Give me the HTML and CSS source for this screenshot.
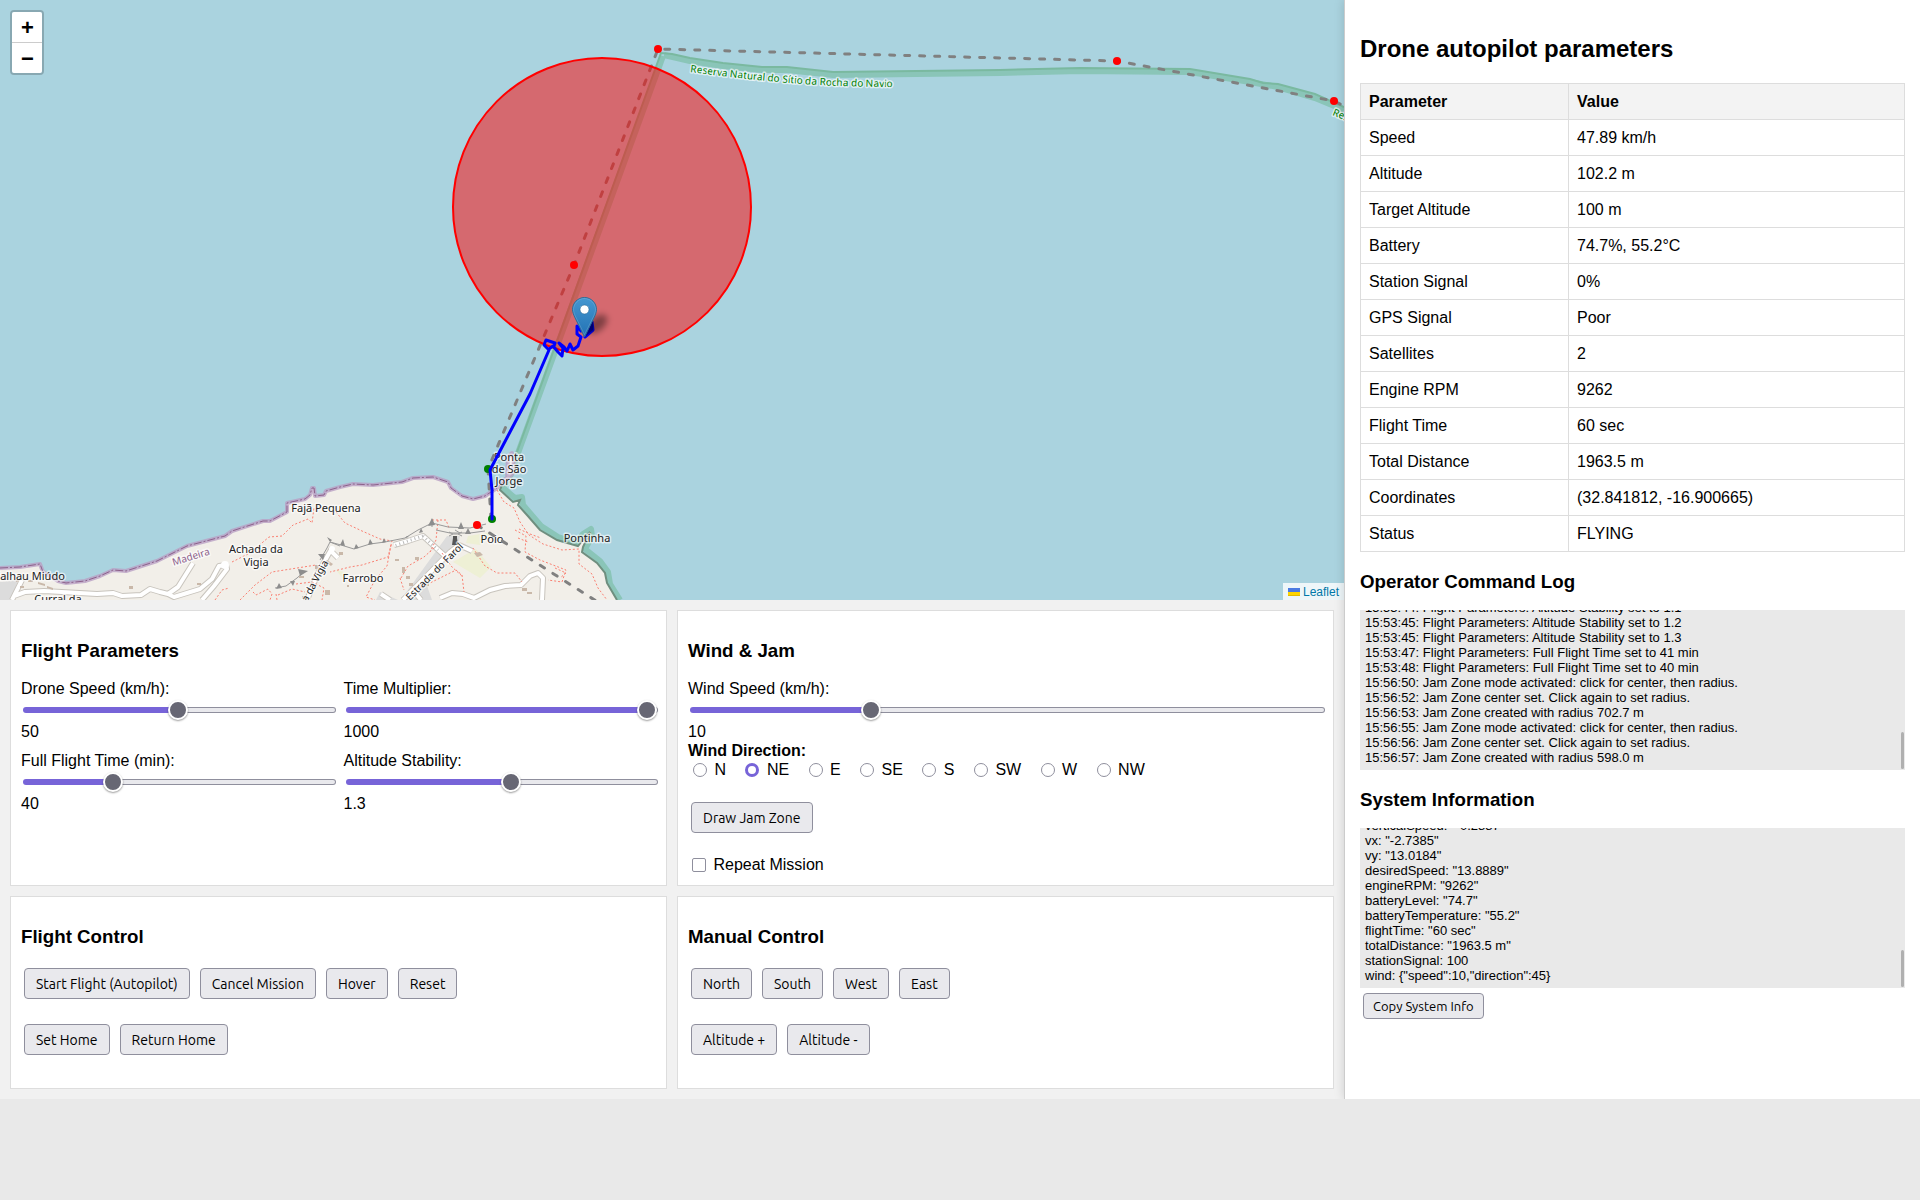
FILE: index.html
```html
<!DOCTYPE html>
<html lang="en">
<head>
<meta charset="utf-8">
<title>Drone autopilot</title>
<link rel="stylesheet" href="styles.css">
</head>
<body>
<div class="app">
  <main class="main">
    <section class="map" aria-label="Map">
      <svg class="map-canvas" viewBox="0 0 1344 600" preserveAspectRatio="xMinYMin slice">
        <defs>
          <linearGradient id="pin" x1="0" y1="0" x2="0" y2="1">
            <stop offset="0" stop-color="#4597d0"/><stop offset="1" stop-color="#2272b4"/>
          </linearGradient>
          <filter id="soft" x="-50%" y="-50%" width="200%" height="200%"><feGaussianBlur stdDeviation="3"/></filter>
          <path id="reserve-label" d="M690 72 Q780 84 840 86 T930 86"/>
        </defs>
        <rect class="sea" width="1344" height="600"/>
        <!-- nature reserve boundary -->
        <path class="reserve-band" d="M664 55 L690 61 L723 66 L762 70 L787 70 L833 75 L1000 73 L1080 71 L1190 72 L1250 82 L1278 87 L1315 98 L1344 110"/>
        <path class="reserve-band" d="M663 56 L518 453 L511 474 L503 488 L515 498 L522 497 L523 505 L541 526 L558 537 L577 543 L583 534 L591 529 L592 536 L585 549 L600 561 L608 572 L610 584 L620 600"/>
        <!-- land -->
        <path class="land" d="M0 600 V568 L20 567 L40 564 L43 572 L58 581 L66 583 L85 581 L100 576 L113 570 L126 571 L157 561 L187 546 L225 536 L232 531 L263 521 L270 521 L287 512 L287 503 L305 499 L310 495 L312 488 L314 488 L315 496 L324 495 L326 491 L340 487 L353 484 L373 485 L402 482 L413 478 L433 477 L448 482 L451 488 L462 496 L473 499 L485 496 L497 488 L507 477 L508 457 L512 453 L514 460 L513 473 L502 485 L500 490 L513 502 L520 500 L518 505 L527 515 L540 530 L557 540 L578 546 L585 537 L590 532 L583 547 L582 552 L597 563 L605 573 L607 583 L617 600 Z"/>
        <path class="residential" d="M0 582 L18 580 L12 600 H0 Z M405 594 L447 536 L460 536 L457 552 L425 580 L432 600 H402 Z M380 592 L398 600 H376 Z"/>
        <path class="field" d="M468 536 L492 532 L480 545 L466 543 Z M453 562 L470 552 L490 568 L480 578 Z M336 570 L348 573 L344 580 Z M470 552 L476 549 L491 567 L486 570 Z"/>
        <path class="border-glow" d="M0 568 L20 567 L40 564 L43 572 L58 581 L66 583 L85 581 L100 576 L113 570 L126 571 L157 561 L187 546 L225 536 L232 531 L263 521 L270 521 L287 512 L287 503 L305 499 L310 495 L312 488 L314 488 L315 496 L324 495 L326 491 L340 487 L353 484 L373 485 L402 482 L413 478 L433 477 L448 482 L451 488 L462 496 L473 499 L485 496 L497 488 L507 477 L508 457 L512 453 L514 460 L513 473 L502 485"/>
        <path class="border-line" d="M0 568 L20 567 L40 564 L43 572 L58 581 L66 583 L85 581 L100 576 L113 570 L126 571 L157 561 L187 546 L225 536 L232 531 L263 521 L270 521 L287 512 L287 503 L305 499 L310 495 L312 488 L314 488 L315 496 L324 495 L326 491 L340 487 L353 484 L373 485 L402 482 L413 478 L433 477 L448 482 L451 488 L462 496 L473 499 L485 496 L497 488 L503 482"/>
        <path class="cliff-coast" d="M502 485 L500 490 L513 502 L520 500 L518 505 L527 515 L540 530 L557 540 L578 546 L585 537 L590 532 L583 547 L582 552 L597 563 L605 573 L607 583 L617 600"/>
        <path class="reserve-line" d="M517 452 L661 53 L672 54 L690 58 L723 63 L762 67 L787 67 L833 72 L1000 70 L1080 68 L1190 69 L1250 79 L1263 83 L1278 84 L1315 94 L1344 107"/>
        <!-- roads -->
        <g class="road-case">
          <path d="M12 600 L22 580 M14 596 L25 592 L44 591 L97 594 L113 593 L122 596 L141 595 L150 589 L160 592 L168 594 L178 587 L193 563 M168 594 L174 597 L200 589 L212 579 L219 566 L226 565 L227 569 L214 586 L202 600"/>
          <path d="M307 600 L318 573 L332 548 M330 550 L338 558"/>
          <path d="M403 600 L450 552 L459 545 L472 551 M445 556 L423 536 L408 541 L394 545 M440 598 L452 593 L463 594 L474 598 L490 590 L505 586 L521 585 L530 576 L538 573 L543 578 L542 600 M413 590 L421 600 M381 594 L390 600"/>
        </g>
        <g class="road">
          <path d="M12 600 L22 580 M14 596 L25 592 L44 591 L97 594 L113 593 L122 596 L141 595 L150 589 L160 592 L168 594 L178 587 L193 563 M168 594 L174 597 L200 589 L212 579 L219 566 L226 565 L227 569 L214 586 L202 600"/>
          <path d="M307 600 L318 573 L332 548 M330 550 L338 558"/>
          <path d="M403 600 L450 552 L459 545 L472 551 M445 556 L423 536 L408 541 L394 545 M440 598 L452 593 L463 594 L474 598 L490 590 L505 586 L521 585 L530 576 L538 573 L543 578 L542 600 M413 590 L421 600 M381 594 L390 600"/>
          <circle cx="332" cy="549" r="3"/><circle cx="225" cy="565" r="4"/>
        </g>
        <path class="road-dots" d="M423 536 L408 541 L394 546 M423 536 L438 550"/>
        <!-- footpaths -->
        <g class="footpath">
          <path d="M232 562 L250 553 L269 537 L282 536 L293 525 L308 519 L312 523 L314 508"/>
          <path d="M336 512 L345 523 L362 531 L380 539 L392 541 L388 557 L362 565 L350 567 L330 572"/>
          <path d="M215 600 L222 590 L229 588 M240 600 L255 585 L272 572 L316 565 M253 592 L256 595 L268 589 L272 594 L270 600 M276 594 L277 600 M296 584 L312 582 L324 588 L322 600 M278 595 L292 589 L305 592"/>
          <path d="M391 545 L387 566 L375 580 L366 597 L375 600 M401 578 L408 566 L424 557 L434 548 M400 578 L404 590 M420 588 L456 570 L462 575 L464 592 M442 553 L452 567 L462 576"/>
          <path d="M473 548 L485 566 L497 573 L515 573 L522 582 M432 520 L446 520 L449 528 M438 520 L436 540 L430 552"/>
          <path d="M497 490 L504 502 L514 508 L520 522 L529 535 L543 544 L562 550 L579 549 L579 564 L592 574 L598 588 L607 600 M515 530 L526 536 L525 552 L540 560 L566 570 L562 582 L548 580 M519 529 L530 534 L541 538 M518 538 L528 542 M555 568 L566 573 L560 578"/>
        </g>
        <!-- cliffs -->
        <path class="cliff" d="M330 542 L341 545 L354 549 L370 544 L385 542 L405 538 L418 530 L432 523 L448 527 L470 528 L486 524 M436 530 L450 533 L470 533 L485 531 M432 519 V527 M455 530 L460 533 M320 560 L327 548 L330 542 L340 546 M275 588 L286 586 L297 578 L305 571"/>
        <path class="cliff-teeth" d="M340 545 L343 539 L345 546 Z M354 549 L356 544 L359 548 Z M368 545 L370 539 L373 544 Z M382 543 L384 538 L386 542 Z M405 538 L407 536 L409 537 Z M419 533 L421 528 L423 532 Z M428 526 L432 518 L435 525 Z M458 529 L461 522 L464 529 Z M465 534 L468 528 L471 534 Z M474 527 L477 521 L480 527 Z M318 554 L325 554 L323 560 Z M298 569 L308 571 L300 576 Z M276 589 L279 583 L282 588 Z M290 581 L295 581 L293 586 Z M327 537 L330 542 L332 540 Z"/>
        <path class="lighthouse" d="M453 536 h4 v2 l1 7 h-6 l1 -7 z"/>
        <path class="cliff" d="M449 536 L453 534 L449 532 M462 536 L458 534 L462 532 M453 534 H458"/>
        <path class="building" d="M20 586 h4 v2 h-4z M28 580 h5 v2 h-5z M38 582 l7 2 v2 l-7 -2z M47 586 l6 2 v2 l-6 -2z M129 586 h4 v3 h-4z M197 583 h4 v2 h-4z M315 565 h4 v4 h-4z M299 576 h5 v2 h-5z M302 596 h4 v3 h-4z M325 590 h5 v5 h-5z M327 560 l6 4 -2 2 -6 -4z M339 552 h4 v3 h-4z M395 559 h4 v2 h-4z M402 567 h3 v6 h-3z M415 557 h4 v3 h-4z M406 576 h4 v3 h-4z M474 553 l6 -1 3 3 -6 2z M409 583 h4 v3 h-4z M522 588 h5 v3 h-5z M527 592 h5 v2 h-5z M426 583 h3 v3 h-3z M347 585 h2 v2 h-2z M16 580 h3 v2 h-3z"/>
        <!-- place names -->
        <g class="place">
          <text x="326" y="512">Fajã Pequena</text>
          <text x="256" y="553">Achada da</text><text x="256" y="566">Vigia</text>
          <text x="363" y="582">Farrobo</text>
          <text x="29" y="580">Calhau Miúdo</text>
          <text x="58" y="603">Curral da</text>
          <text x="492" y="543">Poio</text>
          <text x="587" y="542">Pontinha</text>
          <text x="509" y="461">Ponta</text><text x="509" y="473">de São</text><text x="509" y="485">Jorge</text>
        </g>
        <g class="street">
          <text transform="translate(437 574) rotate(-45)">Estrada do Farol</text>
          <text transform="translate(315 588) rotate(-62)">Rua da Vigia</text>
        </g>
        <text class="region" transform="translate(192 560) rotate(-17)">Madeira</text>
        <text class="reserve-name"><textPath href="#reserve-label">Reserva Natural do Sítio da Rocha do Navio</textPath></text>
        <text class="reserve-name" transform="translate(1332 115) rotate(22)">Reserva</text>
        <!-- planned mission, jam zone and flown track -->
        <path class="mission" d="M491 519 L488 469 L574 265 L658 49 L1117 61 L1334 101 L1410 140 M477 525 L640 629"/>
        <circle class="waypoint done" cx="492" cy="519" r="4"/>
        <circle class="waypoint done" cx="488" cy="469" r="4"/>
        <circle class="jam" cx="602" cy="207" r="149"/>
        <circle class="waypoint" cx="574" cy="265" r="4"/>
        <circle class="waypoint" cx="658" cy="49" r="4"/>
        <circle class="waypoint" cx="1117" cy="61" r="4"/>
        <circle class="waypoint" cx="1334" cy="101" r="4"/>
        <circle class="waypoint" cx="477" cy="525" r="4"/>
        <path class="track" d="M492 519 L492 490 L490 470 L530 394 L549 350 L544 345 L546 340 L555 343 L554 346 M549 349 L553 346 L558 352 L562 356 L563 348 L559 343 L564 347 L567 351 L570 344 L573 350 L578 346 L581 337 L577 334 L577 326 L581 331 L592 322 L593 330 L585 337"/>
        <path class="track-blob" d="M584 331 L593 321 V330 L585 337 Z"/>
        <ellipse class="pin-shadow" cx="597" cy="324" rx="12" ry="7" transform="rotate(-40 597 324)" filter="url(#soft)"/>
        <g transform="translate(572 297)">
          <path d="M12.500 .5C5.600 .5 .5 6.200 .5 12.600c0 2.400 1.300 5.600 2.300 7.800L12.500 40l9.700-19.600c1-2.200 2.300-5.400 2.300-7.800C24.500 6.200 19.400 .5 12.500 .5z" fill="url(#pin)" stroke="#2e6c97"/>
          <path d="M12.500 1.500C6.200 1.500 1.500 6.800 1.500 12.600c0 2.200 1.200 5.300 2.200 7.300L12.500 37.700l8.800-17.800c1-2 2.200-5.100 2.200-7.300C23.500 6.800 18.800 1.500 12.500 1.500z" fill="none" stroke="#fff" stroke-opacity=".15"/>
          <circle cx="12.500" cy="12.500" r="4.500" fill="#fff" stroke="#2e6c97" stroke-opacity=".6"/>
        </g>
      </svg>
      <div class="zoom">
        <button type="button" aria-label="Zoom in">+</button>
        <button type="button" aria-label="Zoom out">−</button>
      </div>
      <div class="attribution">
        <svg width="12" height="8" viewBox="0 0 12 8" aria-hidden="true"><path fill="#4C7BE1" d="M0 0h12v4H0z"/><path fill="#FFD500" d="M0 4h12v3H0z"/><path fill="#E0BC00" d="M0 7h12v1H0z"/></svg>
        <a href="#leaflet">Leaflet</a>
      </div>
    </section>

    <div class="panels">
      <section class="panel">
        <h3>Flight Parameters</h3>
        <div class="sliders">
          <div class="field-row"><label for="speed">Drone Speed (km/h):</label><input id="speed" type="range" min="1" max="100" value="50" style="--fill:49%"><output for="speed">50</output></div>
          <div class="field-row"><label for="mult">Time Multiplier:</label><input id="mult" type="range" min="1" max="1000" value="1000" style="--fill:99%"><output for="mult">1000</output></div>
          <div class="field-row"><label for="ftime">Full Flight Time (min):</label><input id="ftime" type="range" min="10" max="120" value="40" style="--fill:27%"><output for="ftime">40</output></div>
          <div class="field-row"><label for="stab">Altitude Stability:</label><input id="stab" type="range" min="0.5" max="2" step="0.1" value="1.3" style="--fill:53%"><output for="stab">1.3</output></div>
        </div>
      </section>

      <section class="panel">
        <h3>Wind &amp; Jam</h3>
        <div class="field-row"><label for="wind">Wind Speed (km/h):</label><input id="wind" type="range" min="0" max="36" value="10" style="--fill:28%"><output for="wind">10</output></div>
        <fieldset class="directions">
          <legend>Wind Direction:</legend>
          <label><input type="radio" name="dir"> N</label>
          <label><input type="radio" name="dir" checked> NE</label>
          <label><input type="radio" name="dir"> E</label>
          <label><input type="radio" name="dir"> SE</label>
          <label><input type="radio" name="dir"> S</label>
          <label><input type="radio" name="dir"> SW</label>
          <label><input type="radio" name="dir"> W</label>
          <label><input type="radio" name="dir"> NW</label>
        </fieldset>
        <div class="buttons jam-buttons"><button type="button" class="btn">Draw Jam Zone</button></div>
        <label class="repeat"><input type="checkbox"> Repeat Mission</label>
      </section>

      <section class="panel">
        <h3>Flight Control</h3>
        <div class="button-rows">
          <div class="buttons">
            <button type="button" class="btn">Start Flight (Autopilot)</button>
            <button type="button" class="btn">Cancel Mission</button>
            <button type="button" class="btn">Hover</button>
            <button type="button" class="btn">Reset</button>
          </div>
          <div class="buttons">
            <button type="button" class="btn">Set Home</button>
            <button type="button" class="btn">Return Home</button>
          </div>
        </div>
      </section>

      <section class="panel">
        <h3>Manual Control</h3>
        <div class="button-rows">
          <div class="buttons">
            <button type="button" class="btn">North</button>
            <button type="button" class="btn">South</button>
            <button type="button" class="btn">West</button>
            <button type="button" class="btn">East</button>
          </div>
          <div class="buttons">
            <button type="button" class="btn">Altitude +</button>
            <button type="button" class="btn">Altitude -</button>
          </div>
        </div>
      </section>
    </div>
  </main>

  <aside class="sidebar">
    <h2>Drone autopilot parameters</h2>
    <table class="params">
      <thead><tr><th>Parameter</th><th>Value</th></tr></thead>
      <tbody>
        <tr><td>Speed</td><td>47.89 km/h</td></tr>
        <tr><td>Altitude</td><td>102.2 m</td></tr>
        <tr><td>Target Altitude</td><td>100 m</td></tr>
        <tr><td>Battery</td><td>74.7%, 55.2°C</td></tr>
        <tr><td>Station Signal</td><td>0%</td></tr>
        <tr><td>GPS Signal</td><td>Poor</td></tr>
        <tr><td>Satellites</td><td>2</td></tr>
        <tr><td>Engine RPM</td><td>9262</td></tr>
        <tr><td>Flight Time</td><td>60 sec</td></tr>
        <tr><td>Total Distance</td><td>1963.5 m</td></tr>
        <tr><td>Coordinates</td><td>(32.841812, -16.900665)</td></tr>
        <tr><td>Status</td><td>FLYING</td></tr>
      </tbody>
    </table>
    <h3>Operator Command Log</h3>
    <div class="log">
      <div>15:53:44: Flight Parameters: Altitude Stability set to 1.1</div>
      <div>15:53:45: Flight Parameters: Altitude Stability set to 1.2</div>
      <div>15:53:45: Flight Parameters: Altitude Stability set to 1.3</div>
      <div>15:53:47: Flight Parameters: Full Flight Time set to 41 min</div>
      <div>15:53:48: Flight Parameters: Full Flight Time set to 40 min</div>
      <div>15:56:50: Jam Zone mode activated: click for center, then radius.</div>
      <div>15:56:52: Jam Zone center set. Click again to set radius.</div>
      <div>15:56:53: Jam Zone created with radius 702.7 m</div>
      <div>15:56:55: Jam Zone mode activated: click for center, then radius.</div>
      <div>15:56:56: Jam Zone center set. Click again to set radius.</div>
      <div>15:56:57: Jam Zone created with radius 598.0 m</div>
    </div>
    <h3>System Information</h3>
    <div class="log">
      <div>verticalSpeed: "-0.2887"</div>
      <div>vx: "-2.7385"</div>
      <div>vy: "13.0184"</div>
      <div>desiredSpeed: "13.8889"</div>
      <div>engineRPM: "9262"</div>
      <div>batteryLevel: "74.7"</div>
      <div>batteryTemperature: "55.2"</div>
      <div>flightTime: "60 sec"</div>
      <div>totalDistance: "1963.5 m"</div>
      <div>stationSignal: 100</div>
      <div>wind: {"speed":10,"direction":45}</div>
    </div>
    <button type="button" class="btn btn-small">Copy System Info</button>
  </aside>
</div>
</body>
</html>
```
FILE: styles.css
```css
* { box-sizing: border-box; }

body {
  margin: 0;
  background: #e9e9e9;
  color: #000;
  font: 16px/18px "Liberation Sans", Arial, sans-serif;
}

.app {
  display: grid;
  grid-template-columns: 7fr 3fr;
}

.main { min-width: 0; background: #f1f1f1; }

h2 { margin: 20px 0; font-size: 24px; line-height: 28px; }
h3 { margin: 19px 0 18px; line-height: 21px; }

/* Map */
.map {
  position: relative;
  height: 50vh;
  overflow: hidden;
  background: #aad3df;
}
.map-canvas { display: block; width: 100%; height: 100%; }
.sea { fill: #aad3df; }
.land { fill: #f2efe9; }
.residential { fill: #dcdcdc; }
.field { fill: #eef0d5; }
.building { fill: #c9b8a9; }
.lighthouse { fill: #555; }
.reserve-band { fill: none; stroke: #8ac5b8; stroke-width: 6; stroke-linejoin: round; }
.reserve-line { fill: none; stroke: #7ab9a0; stroke-width: 2; }
.border-glow { fill: none; stroke: #b9a0c4; stroke-width: 4; stroke-linejoin: round; opacity: .8; }
.border-line { fill: none; stroke: #8d618b; stroke-width: 1; stroke-dasharray: 8 2 2 2; }
.cliff-coast { fill: none; stroke: #6f8f7f; stroke-width: 2; }
.road-case path { fill: none; stroke: #c8c4bd; stroke-width: 6; stroke-linejoin: round; }
.road path { fill: none; stroke: #fff; stroke-width: 4; stroke-linejoin: round; }
.road circle { fill: #fff; }
.road-dots { fill: none; stroke: #bbb; stroke-width: 3; stroke-dasharray: 1 3; }
.footpath path { fill: none; stroke: #fa8072; stroke-width: 1; stroke-dasharray: 2 2; }
.cliff { fill: none; stroke: #999; stroke-width: 1; }
.cliff-teeth { fill: #8d8d8d; }
.place text, .street text, .region, .reserve-name {
  font-family: "Noto Sans", sans-serif;
  font-size: 10px;
  fill: #222;
  stroke: rgba(255, 255, 255, .6);
  stroke-width: 3px;
  stroke-linejoin: round;
  paint-order: stroke;
  text-anchor: middle;
}
.place text { font-size: 11px; }
.region { fill: #8d618b; }
.reserve-name { fill: green; text-anchor: start; }
.mission { fill: none; stroke: gray; stroke-width: 3; stroke-dasharray: 5 10; stroke-linecap: round; }
.jam { fill: rgba(255, 0, 0, .5); stroke: red; stroke-width: 2; }
.waypoint { fill: red; }
.waypoint.done { fill: green; }
.track { fill: none; stroke: blue; stroke-width: 3; stroke-linejoin: round; stroke-linecap: round; }
.track-blob { fill: #0000a8; }
.pin-shadow { fill: rgba(0, 0, 0, .4); }

.zoom {
  position: absolute;
  top: 10px;
  left: 10px;
  width: 34px;
  border: 2px solid rgba(0, 0, 0, .2);
  border-radius: 4px;
  background-clip: padding-box;
}
.zoom button {
  display: block;
  width: 30px;
  height: 30px;
  padding: 2px 0 0 1px;
  border: 0;
  border-radius: 0 0 2px 2px;
  background: #fff;
  color: #000;
  font: bold 22px/28px "Liberation Sans", sans-serif;
}
.zoom button:first-child {
  height: 31px;
  border-bottom: 1px solid #ccc;
  border-radius: 2px 2px 0 0;
}
.attribution {
  position: absolute;
  right: 0;
  bottom: 0;
  display: flex;
  align-items: center;
  gap: 3px;
  padding: 1px 5px 0;
  background: rgba(255, 255, 255, .8);
  font-size: 12px;
  line-height: 16px;
}
.attribution a { color: #0078a8; text-decoration: none; }

/* Control panels */
.panels {
  display: grid;
  grid-template-columns: 1fr 1fr;
  gap: 10px;
  padding: 10px;
}
.panel {
  padding: 10px;
  border: 1px solid #ddd;
  background: #fff;
}
.sliders { display: grid; grid-template-columns: 1fr 1fr; gap: 10px; }
.field-row { display: grid; line-height: 19px; }
.directions { margin: 0; padding: 0; border: 0; line-height: 20px; }
.directions legend { padding: 1px 0 0; font-weight: bold; line-height: 18px; }
.directions label { margin-right: 10px; }

input[type="range"] {
  appearance: none;
  width: 100%;
  height: 20px;
  margin: 2px;
  background: none;
}
input[type="range"]::-webkit-slider-runnable-track {
  height: 6px;
  border: 1px solid transparent;
  border-radius: 3px;
  background:
    linear-gradient(#7764d8, #7764d8) 0 0 / var(--fill) 100% no-repeat border-box,
    linear-gradient(#e9e9ed, #e9e9ed) padding-box,
    linear-gradient(#8f8f9d, #8f8f9d) border-box;
}
input[type="range"]::-webkit-slider-thumb {
  appearance: none;
  width: 20px;
  height: 20px;
  margin-top: -8px;
  border: 2px solid #fff;
  border-radius: 50%;
  background: #676774;
  box-shadow: 0 1px 2px rgba(0, 0, 0, .4);
}
input[type="radio"],
input[type="checkbox"] {
  appearance: none;
  width: 14px;
  height: 14px;
  margin: 3px 3px 0 5px;
  border: 1px solid #8f8f9d;
  border-radius: 50%;
  background: #fff;
  vertical-align: -2px;
}
input[type="radio"]:checked { border: 3px solid #7764d8; }
input[type="checkbox"] { margin-left: 4px; border-radius: 2px; }

.button-rows { display: grid; gap: 25px; padding-bottom: 23px; }
.buttons { display: flex; flex-wrap: wrap; gap: 10px; padding: 0 3px; }
.button-rows .buttons:first-child { padding-top: 3px; }
.jam-buttons { padding-top: 22px; padding-bottom: 22px; }
.repeat { display: block; line-height: 20px; }

.btn {
  height: 31px;
  padding: 0 11px;
  border: 1px solid #8f8f9d;
  border-radius: 4px;
  background: #e9e9ed;
  color: #000;
  font: 14px/18px Ubuntu, "Noto Sans", sans-serif;
}
.btn-small { height: 26px; margin: 5px 3px; padding: 0 9px; font-size: 13px; }

/* Sidebar */
.sidebar {
  position: relative;
  min-width: 0;
  padding: 15px;
  border-left: 1px solid #ccc;
  background: #fff;
  box-shadow: 0 0 10px rgba(0, 0, 0, .15);
}
.params { width: 100%; border-collapse: collapse; }
.params th, .params td {
  height: 36px;
  padding: 8px;
  border: 1px solid #ddd;
  text-align: left;
}
.params th { background: #f3f3f3; }
.params th:first-child { width: 208px; }

.log {
  position: relative;
  display: flex;
  flex-direction: column;
  justify-content: flex-end;
  height: 160px;
  padding: 5px;
  overflow: hidden;
  background: #e9e9e9;
  font-size: 13px;
  line-height: 15px;
}
.log::after {
  content: "";
  position: absolute;
  right: 1px;
  bottom: 1px;
  width: 3px;
  height: 37px;
  border-radius: 2px;
  background: #b0b0b0;
}
```
